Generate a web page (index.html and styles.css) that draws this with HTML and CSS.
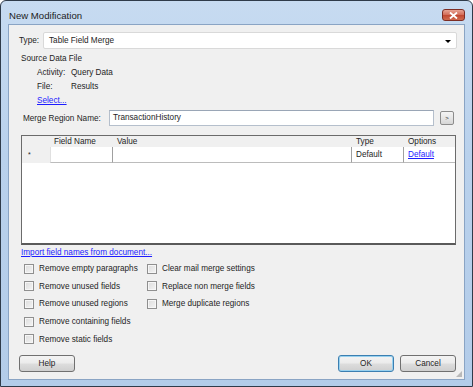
FILE: index.html
```html
<!DOCTYPE html>
<html lang="en">
<head>
    <meta charset="UTF-8">
    <title>New Modification</title>
    <link rel="stylesheet" href="styles.css">
</head>
<body>
    <div class="window">
        <div class="titlebar">
            <span class="title">New Modification</span>
            <span class="close-btn">
                <svg width="9" height="7" viewBox="0 0 9 7"><path d="M1 0.5 L8 6.5 M8 0.5 L1 6.5" stroke="#fff" stroke-width="1.8"/></svg>
            </span>
        </div>

        <div class="client">
            <div class="type-row">
                <span class="type-label">Type:</span>
                <div class="combo">
                    <span>Table Field Merge</span>
                    <span class="arrow"></span>
                </div>
            </div>

            <div class="source">
                <div class="line">Source Data File</div>
                <div class="line indent"><span class="key">Activity:</span>Query Data</div>
                <div class="line indent"><span class="key">File:</span>Results</div>
                <div class="line indent"><a href="#">Select...</a></div>
            </div>

            <div class="merge-row">
                <span class="merge-label">Merge Region Name:</span>
                <div class="textbox">TransactionHistory</div>
                <span class="small-btn">&gt;</span>
            </div>

            <div class="grid">
                <div class="cell head rowhead"></div>
                <div class="cell head">Field Name</div>
                <div class="cell head">Value</div>
                <div class="cell head">Type</div>
                <div class="cell head">Options</div>

                <div class="cell rowhead star">*</div>
                <div class="cell data sep"></div>
                <div class="cell data sep"></div>
                <div class="cell data sep">Default</div>
                <div class="cell data"><a href="#">Default</a></div>
            </div>

            <a href="#" class="import-link">Import field names from document...</a>

            <div class="checks">
                <label class="check"><span class="box"></span>Remove empty paragraphs</label>
                <label class="check"><span class="box"></span>Clear mail merge settings</label>
                <label class="check"><span class="box"></span>Remove unused fields</label>
                <label class="check"><span class="box"></span>Replace non merge fields</label>
                <label class="check"><span class="box"></span>Remove unused regions</label>
                <label class="check"><span class="box"></span>Merge duplicate regions</label>
                <label class="check"><span class="box"></span>Remove containing fields</label>
                <span></span>
                <label class="check"><span class="box"></span>Remove static fields</label>
            </div>

            <div class="buttons">
                <button class="btn">Help</button>
                <span class="spacer"></span>
                <button class="btn default">OK</button>
                <button class="btn">Cancel</button>
            </div>
            <span class="grip"></span>
        </div>
    </div>
</body>
</html>
```

FILE: styles.css
```css
body {
    margin: 0;
    padding: 0;
    background: #ffffff;
    font-family: "Liberation Sans", Arial, sans-serif;
    font-size: 8.2px;
    color: #1e1e1e;
}

.window {
    box-sizing: border-box;
    width: 473px;
    height: 387px;
    border: 1px solid #2f3b4a;
    border-radius: 6px 6px 0 0;
    background: linear-gradient(180deg, #c7dbf1 0%, #b9d1ec 40%, #b3cce9 100%);
    display: flex;
    flex-direction: column;
}

.titlebar {
    height: 23px;
    display: flex;
    align-items: flex-start;
    flex-shrink: 0;
}

.title {
    font-size: 9.6px;
    color: #1b1b1b;
    margin: 9px 0 0 8px;
}

.close-btn {
    box-sizing: border-box;
    width: 23px;
    height: 12px;
    margin: 8px 7px 0 auto;
    border: 1px solid #7d2d24;
    border-radius: 3px;
    background: linear-gradient(180deg, #e8a393 0%, #d4705c 45%, #c24a33 55%, #cf6a4e 100%);
    display: flex;
    align-items: center;
    justify-content: center;
}

.client {
    position: relative;
    box-sizing: border-box;
    flex: 1;
    margin: 0 7px 6px 7px;
    border: 1px solid #8aa4c4;
    background: #f0f0f0;
    padding: 7px 7px 0 10px;
    display: flex;
    flex-direction: column;
}

/* Type row */
.type-row {
    display: flex;
    align-items: center;
    height: 17px;
}

.type-label {
    width: 24px;
}

.combo {
    box-sizing: border-box;
    flex: 1;
    height: 17px;
    border: 1px solid #d9d9d9;
    border-radius: 2px;
    background: #ffffff;
    display: flex;
    align-items: center;
    padding: 0 5px 0 5px;
}

.combo span:first-child {
    flex: 1;
}

.arrow {
    width: 0;
    height: 0;
    border-left: 3px solid transparent;
    border-right: 3px solid transparent;
    border-top: 3px solid #000;
    margin-top: 1px;
}

/* Source data file */
.source {
    margin-top: 3px;
}

.line {
    height: 14px;
    line-height: 14px;
    padding-left: 2px;
}

.indent {
    padding-left: 18px;
}

.key {
    display: inline-block;
    width: 34px;
}

a {
    color: #1d1dff;
    text-decoration: underline;
}

/* Merge region */
.merge-row {
    display: flex;
    align-items: center;
    height: 16px;
    margin-top: 2px;
    padding-left: 4px;
}

.merge-label {
    width: 86px;
}

.textbox {
    box-sizing: border-box;
    width: 325px;
    height: 16px;
    border: 1px solid #b5bfcc;
    border-top-color: #9aa6b6;
    background: #ffffff;
    line-height: 14px;
    padding-left: 3px;
}

.small-btn {
    box-sizing: border-box;
    width: 14px;
    height: 14px;
    margin-left: 6px;
    border: 1px solid #8c8c8c;
    border-radius: 2px;
    background: linear-gradient(180deg, #f4f4f4 0%, #e6e6e6 50%, #d6d6d6 100%);
    font-size: 6px;
    display: flex;
    align-items: center;
    justify-content: center;
}

/* Grid */
.grid {
    box-sizing: border-box;
    margin-top: 9px;
    margin-left: 2px;
    width: 435px;
    height: 110px;
    border: 1px solid #6b6b6b;
    border-bottom: 2px solid #5a5a5a;
    background: #ffffff;
    display: grid;
    grid-template-columns: 28px 63px 239px 52px 51px;
    grid-template-rows: 11px 16px;
    align-content: start;
}

.cell {
    box-sizing: border-box;
    padding-left: 4px;
    white-space: nowrap;
    overflow: hidden;
}

.head {
    background: #f0f0f0;
    line-height: 11px;
}

.rowhead {
    background: #f0f0f0;
}

.star {
    line-height: 16px;
    padding-left: 6px;
    font-size: 7px;
}

.data {
    line-height: 15px;
    border-bottom: 1px solid #bcbcbc;
}

.sep {
    border-right: 1px solid #a0a0a0;
}

.grid .data:nth-child(7) {
    border-left: 1px solid #e0e0e0;
}

/* Link and checkboxes */
.import-link {
    margin-left: 2px;
    height: 14px;
    line-height: 14px;
    margin-top: 1px;
    align-self: flex-start;
}

.checks {
    display: grid;
    grid-template-columns: 123px auto;
    grid-auto-rows: 17.6px;
    margin-left: 5px;
    margin-top: 0px;
}

.check {
    display: flex;
    align-items: center;
}

.box {
    box-sizing: border-box;
    width: 10px;
    height: 10px;
    border: 1px solid #8f8f8f;
    background: linear-gradient(135deg, #dcdcdc 0%, #f4f4f4 100%);
    margin-right: 5px;
    box-shadow: inset 0 0 0 1px #f6f6f6;
}

/* Buttons */
.buttons {
    display: flex;
    margin-top: 7px;
    padding-right: 1px;
}

.spacer {
    flex: 1;
}

.btn {
    box-sizing: border-box;
    width: 56px;
    height: 17px;
    margin-left: 6px;
    border: 1px solid #707070;
    border-radius: 3px;
    background: linear-gradient(180deg, #f3f3f3 0%, #ebebeb 48%, #dddddd 52%, #cfcfcf 100%);
    font-family: "Liberation Sans", Arial, sans-serif;
    font-size: 8.2px;
    color: #1e1e1e;
    padding: 0;
}

.buttons .btn:first-child {
    margin-left: 0;
}

.btn.default {
    border-color: #3c7fb1;
    box-shadow: inset 0 0 0 1px #98d1ef;
}

.grip {
    position: absolute;
    right: 2px;
    bottom: 2px;
    width: 6px;
    height: 6px;
    background-image: radial-gradient(circle, #b9b9b9 0.8px, transparent 1px);
    background-size: 2px 2px;
    clip-path: polygon(100% 0, 100% 100%, 0 100%);
}
```
